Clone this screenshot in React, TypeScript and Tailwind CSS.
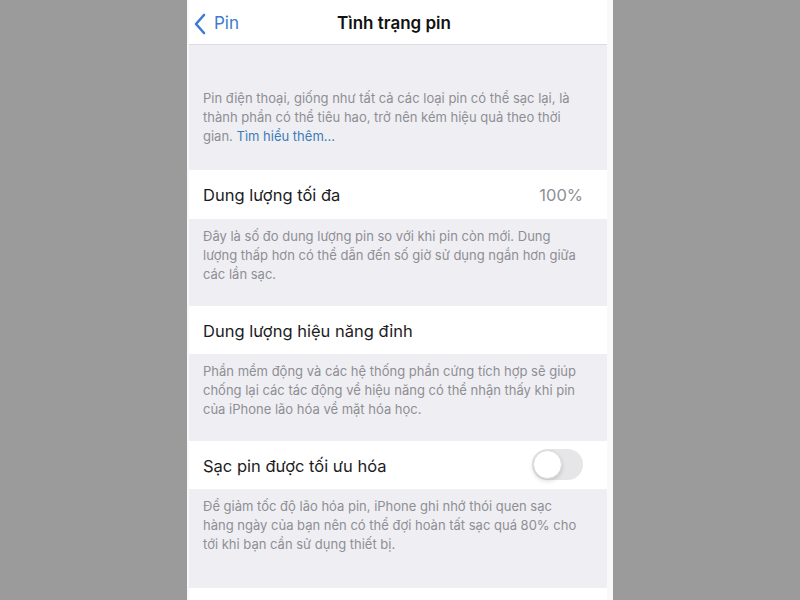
import React from "react";

const font = { fontFamily: "Inter, 'Noto Sans', 'Liberation Sans', sans-serif" };

function Note({ lines, pt, h }: { lines: React.ReactNode[]; pt: string; h: string }) {
  return (
    <div className={`bg-[#efeff3] px-[14px] ${pt} ${h} text-[13px] leading-[19px] text-[#8e8e93]`}>
      {lines.map((l, i) => (
        <div key={i} className="whitespace-nowrap">
          {l}
        </div>
      ))}
    </div>
  );
}

function Row({ children, h }: { children: React.ReactNode; h: string }) {
  return (
    <div className={`flex items-center justify-between bg-white pl-[14px] pr-[24px] pt-[2px] ${h} text-[16.5px] text-[#1c1c1e]`}>
      {children}
    </div>
  );
}

export default function App() {
  return (
    <div className="flex h-[600px] w-[800px] justify-center overflow-hidden bg-[#9b9b9b]" style={font}>
      <div className="flex w-[426px] flex-col bg-[#f9f9fb] pl-[2px] pr-[6px]">
        <div className="relative flex h-[45px] shrink-0 items-center border-b border-[#dcdce0] bg-white pt-[3px]">
          <div className="flex items-center pl-[4px] text-[#3b7bd0]">
            <svg width="14" height="22" viewBox="0 0 14 22" fill="none">
              <path d="M11 2 L3 11 L11 20" stroke="#3b7bd0" strokeWidth="2.6" strokeLinecap="round" strokeLinejoin="round" />
            </svg>
            <span className="ml-[7px] text-[17px]">Pin</span>
          </div>
          <div className="absolute left-0 right-0 pr-[8px] text-center text-[17px] font-semibold text-[#111]">Tình trạng pin</div>
        </div>

        <Note
          pt="pt-[44px]"
          h="h-[125px]"
          lines={[
            "Pin điện thoại, giống như tất cả các loại pin có thể sạc lại, là",
            "thành phần có thể tiêu hao, trở nên kém hiệu quả theo thời",
            <>
              gian. <span className="text-[#3d7cb8]">Tìm hiểu thêm...</span>
            </>,
          ]}
        />

        <Row h="h-[49px]">
          <span>Dung lượng tối đa</span>
          <span className="text-[#8e8e93]">100%</span>
        </Row>

        <Note
          pt="pt-[8px]"
          h="h-[87px]"
          lines={[
            "Đây là số đo dung lượng pin so với khi pin còn mới. Dung",
            "lượng thấp hơn có thể dẫn đến số giờ sử dụng ngắn hơn giữa",
            "các lần sạc.",
          ]}
        />

        <Row h="h-[48px]">
          <span>Dung lượng hiệu năng đỉnh</span>
        </Row>

        <Note
          pt="pt-[8px]"
          h="h-[87px]"
          lines={[
            "Phần mềm động và các hệ thống phần cứng tích hợp sẽ giúp",
            "chống lại các tác động về hiệu năng có thể nhận thấy khi pin",
            "của iPhone lão hóa về mặt hóa học.",
          ]}
        />

        <Row h="h-[48px]">
          <span>Sạc pin được tối ưu hóa</span>
          <div className="relative -mt-[3px] h-[31px] w-[51px] rounded-full bg-[#e6e6e9]">
            <div className="absolute left-[1px] top-[1px] h-[29px] w-[29px] rounded-full border border-[#dadade] bg-white shadow-[0_2px_4px_rgba(0,0,0,0.15)]" />
          </div>
        </Row>

        <Note
          pt="pt-[8px]"
          h="h-[99px]"
          lines={[
            "Để giảm tốc độ lão hóa pin, iPhone ghi nhớ thói quen sạc",
            "hàng ngày của bạn nên có thể đợi hoàn tất sạc quá 80% cho",
            "tới khi bạn cần sử dụng thiết bị.",
          ]}
        />

        <div className="flex-1 bg-white" />
      </div>
    </div>
  );
}
